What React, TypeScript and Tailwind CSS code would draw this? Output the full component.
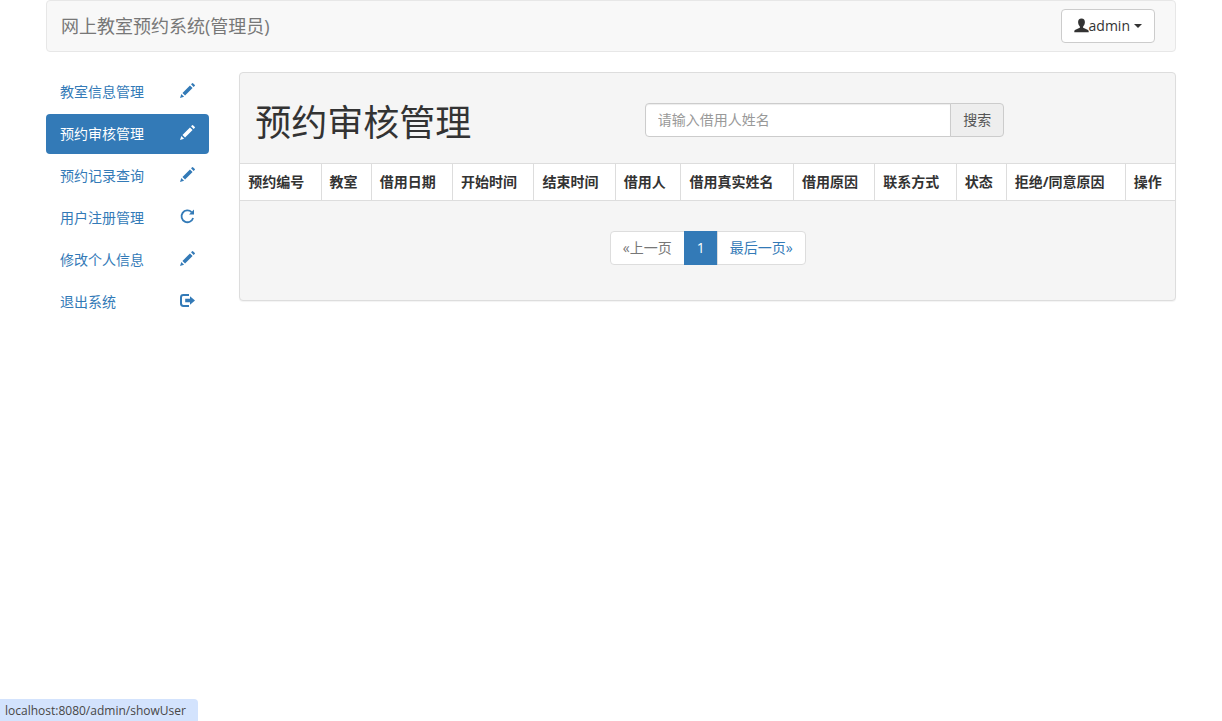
import { type ReactNode } from "react";

type IconName = "pencil" | "repeat" | "logout";

const menu: { label: string; icon: IconName; active?: boolean }[] = [
  { label: "教室信息管理", icon: "pencil" },
  { label: "预约审核管理", icon: "pencil", active: true },
  { label: "预约记录查询", icon: "pencil" },
  { label: "用户注册管理", icon: "repeat" },
  { label: "修改个人信息", icon: "pencil" },
  { label: "退出系统", icon: "logout" },
];

const columns = [
  "预约编号",
  "教室",
  "借用日期",
  "开始时间",
  "结束时间",
  "借用人",
  "借用真实姓名",
  "借用原因",
  "联系方式",
  "状态",
  "拒绝/同意原因",
  "操作",
];

function UserIcon() {
  return (
    <svg width="15" height="17" viewBox="0 0 15 17" fill="currentColor" aria-hidden>
      <path d="M7.5 0.4C5.2 0.4 4 2 4.1 4.3C4.2 6.3 4.9 7.5 5.8 8.4C6.2 9.1 6 9.7 5.2 10.1L1.5 11.7C0.6 12.1 0.3 12.7 0.3 13.4V14.2H14.7V13.4C14.7 12.7 14.4 12.1 13.5 11.7L9.8 10.1C9 9.7 8.8 9.1 9.2 8.4C10.1 7.5 10.8 6.3 10.9 4.3C11 2 9.8 0.4 7.5 0.4Z" />
    </svg>
  );
}

function MenuIcon({ name }: { name: IconName }) {
  if (name === "pencil") {
    return (
      <svg width="15" height="15" viewBox="-16 -1210 1226 1226" fill="currentColor" aria-hidden>
        <path
          transform="scale(1 -1)"
          d="M1011 1210q19 0 33 -13l153 -153q13 -14 13 -33t-13 -33l-99 -92l-214 214l95 96q13 14 32 14zM1013 800l-615 -614l-214 214l614 614zM317 96l-333 -112l110 335z"
        />
      </svg>
    );
  }
  if (name === "repeat") {
    return (
      <svg width="15" height="15" viewBox="0 0 15 15" fill="none" aria-hidden>
        <path d="M11.6 3.1A5.9 5.9 0 1 0 13.1 9" stroke="currentColor" strokeWidth="1.8" />
        <path d="M14 0.6V5.6H9Z" fill="currentColor" />
      </svg>
    );
  }
  return (
    <svg width="15" height="15" viewBox="0 0 15 15" fill="none" aria-hidden>
      <path d="M9 2H3.4Q1 2 1 4.4V10.6Q1 13 3.4 13H9" stroke="currentColor" strokeWidth="2" />
      <path d="M10 3.2L15 7.5L10 11.8V9.2H5.2V5.8H10Z" fill="currentColor" />
    </svg>
  );
}

function PageLink({ className, children }: { className: string; children: ReactNode }) {
  return (
    <li className="-ml-px first:ml-0">
      <a href="#" className={`block border px-3 py-1.5 leading-5 ${className}`}>
        {children}
      </a>
    </li>
  );
}

export default function App() {
  return (
    <div className="px-[31px] font-['Open_Sans','Noto_Sans_CJK_SC',sans-serif] text-sm text-[#333]">
      <div className="px-[15px]">
        <header className="flex items-center justify-between rounded border border-[#e7e7e7] bg-[#f8f8f8] py-2 pr-5 pl-[14px]">
          <a href="#" className="text-lg leading-5 text-[#777]">
            网上教室预约系统(管理员)
          </a>
          <button
            type="button"
            className="flex items-center rounded border border-[#ccc] bg-white px-3 py-1.5 leading-5"
          >
            <UserIcon />
            admin
            <svg width="8" height="4" viewBox="0 0 8 4" fill="currentColor" className="ml-1" aria-hidden>
              <path d="M0 0H8L4 4Z" />
            </svg>
          </button>
        </header>
      </div>

      <div className="mt-5 flex items-start">
        <nav className="w-1/6 px-[15px]">
          <ul className="flex flex-col gap-0.5">
            {menu.map((item) => (
              <li key={item.label}>
                <a
                  href="#"
                  className={`flex items-center justify-between rounded px-[14px] py-2.5 leading-5 ${
                    item.active ? "bg-[#337ab7] text-white" : "text-[#337ab7]"
                  }`}
                >
                  {item.label}
                  <span className="pb-1">
                    <MenuIcon name={item.icon} />
                  </span>
                </a>
              </li>
            ))}
          </ul>
        </nav>

        <main className="w-5/6 px-[15px]">
          <div className="rounded border border-[#ddd] bg-[#f5f5f5] shadow-[0_1px_1px_rgba(0,0,0,0.05)]">
            <div className="flex pt-[30px] pb-5">
              <h1 className="w-5/12 px-[15px] text-4xl leading-10">预约审核管理</h1>
              <form className="w-5/12 px-[15px]">
                <div className="flex">
                  <input
                    type="text"
                    aria-label="借用人姓名"
                    placeholder="请输入借用人姓名"
                    className="min-w-0 flex-1 rounded-l border border-[#ccc] bg-white px-3 py-1.5 leading-5 shadow-[inset_0_1px_1px_rgba(0,0,0,0.075)] placeholder:text-[#999]"
                  />
                  <button
                    type="button"
                    className="-ml-px rounded-r border border-[#ccc] bg-[#eee] px-3 py-1.5 leading-5 text-[#555]"
                  >
                    搜索
                  </button>
                </div>
              </form>
            </div>

            <table className="w-full border-collapse bg-white">
              <thead>
                <tr>
                  {columns.map((name) => (
                    <th
                      key={name}
                      className="border border-[#ddd] p-2 text-left leading-5 font-bold whitespace-nowrap first:border-l-0 last:border-r-0"
                    >
                      {name}
                    </th>
                  ))}
                </tr>
              </thead>
            </table>

            <ul className="flex justify-center pt-[30px] pb-[35px]">
              <PageLink className="rounded-l border-[#ddd] bg-white text-[#777]">«上一页</PageLink>
              <PageLink className="border-[#337ab7] bg-[#337ab7] text-white">1</PageLink>
              <PageLink className="rounded-r border-[#ddd] bg-white text-[#337ab7]">最后一页»</PageLink>
            </ul>
          </div>
        </main>
      </div>

      <div className="fixed bottom-0 left-0 rounded-tr bg-[#d3e3fd] pt-0.5 pr-3 pl-[5px] text-xs leading-5 text-[#474747]">
        localhost:8080/admin/showUser
      </div>
    </div>
  );
}
